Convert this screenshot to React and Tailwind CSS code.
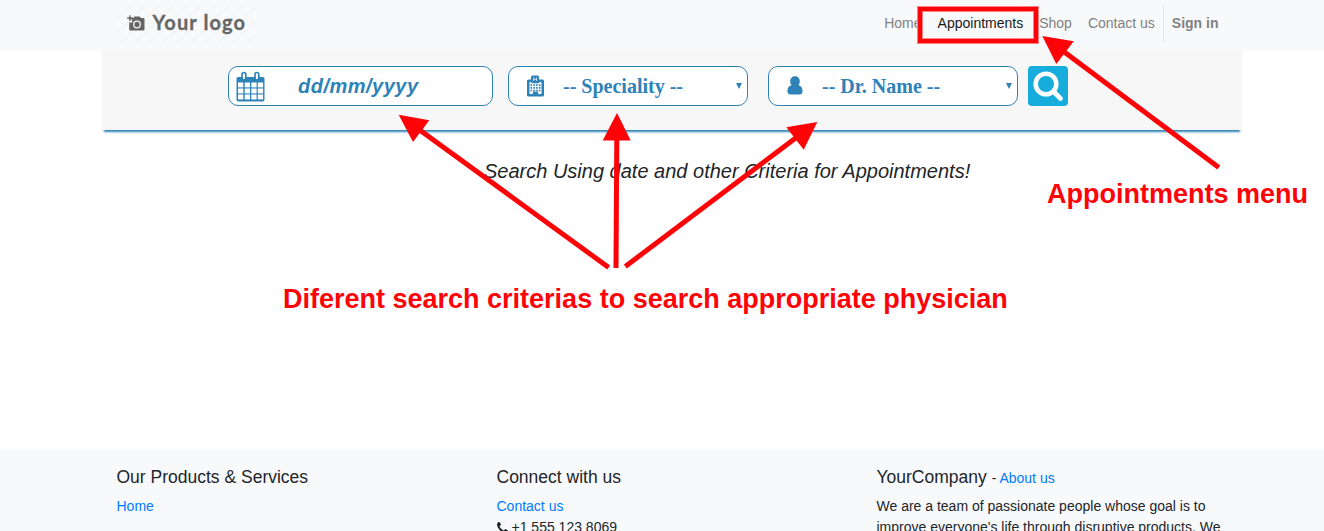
const arrows = [
  { head: '398.7,114.7 429.3,120.3 413,142', x1: 608.7, y1: 267.5, x2: 419, y2: 129.5 },
  { head: '617,113 602.7,140.5 630.7,140.5', x1: 616, y1: 268, x2: 616.8, y2: 138 },
  { head: '817.3,122 786.3,127.3 803.7,149.7', x1: 625.3, y1: 266.5, x2: 797, y2: 137 },
  { head: '1042.3,36 1073.7,41.3 1056.3,64', x1: 1218.8, y1: 167.5, x2: 1063, y2: 51 },
];

function LogoMark() {
  return (
    <svg viewBox="0 0 138 38" className="h-[38px] w-[138px]">
      <defs>
        <pattern id="stripes" width="14" height="14" patternUnits="userSpaceOnUse">
          <path d="M-3 17L17 -3M-3 3L3 -3M11 17L17 11" stroke="#f4f5f5" strokeWidth="2.2" />
        </pattern>
      </defs>
      <rect width="138" height="38" fill="url(#stripes)" />
      <path d="M12.5 13h3.8l1.2-1.5h5L24 13h2.2c.8 0 1.3.5 1.3 1.200v10c0 .8-.5 1.300-1.300 1.300H13.500c-.8 0-1.300-.5-1.300-1.300v-6.700h3v-3h-2.700z" fill="#666" />
      <circle cx="20" cy="19.500" r="3.300" fill="none" stroke="#f8f9fb" strokeWidth="1.300" />
      <path d="M12.900 10.300v5.600M10.200 13h5.400" stroke="#666" strokeWidth="1.300" />
      <text x="35.500" y="25" textLength="92.500" lengthAdjust="spacing" fill="#666" stroke="#666" strokeWidth=".3" className="font-['Lato',sans-serif] text-[20px] font-bold">Your logo</text>
    </svg>
  );
}

function CalendarIcon() {
  return (
    <svg viewBox="0 0 29 31" className="h-[31px] w-[29px] shrink-0">
      <rect x="0.500" y="6" width="28" height="24.500" rx="1.800" fill="#2e82b8" />
      {[2, 8.700, 15.300, 21.800].map((x) =>
        [11.500, 17.500, 23.500].map((y) => (
          <rect key={`${x}-${y}`} x={x} y={y} width="5.300" height="4.900" fill="#fff" />
        )),
      )}
      <rect x="6" y="1.500" width="3.800" height="7.500" rx="1.900" fill="#fff" stroke="#2e82b8" strokeWidth="1.700" />
      <rect x="19" y="1.500" width="3.800" height="7.500" rx="1.900" fill="#fff" stroke="#2e82b8" strokeWidth="1.700" />
    </svg>
  );
}

function HospitalIcon() {
  return (
    <svg viewBox="0 0 17 22" className="h-[22px] w-[17px] shrink-0">
      <path d="M0 6q0-1.500 1.500-1.500H4V2q0-1.500 1.500-1.500h5Q12 .5 12 2v2.500h3.500Q17 4.500 17 6v14q0 1.500-1.500 1.500h-14Q0 21.500 0 20z" fill="#2e82b8" />
      <path d="M6.700 2.500v3.500M9.500 2.500v3.500M6.700 4.300h2.800" stroke="#fff" strokeWidth=".7" />
      <path d="M2.500 7.200h2.200v1h7.300v-1h2.500v11.800h-3.300v-2.500H5.800v2.500H2.500z" fill="#fff" />
      <path d="M3.500 10.200h10M3.500 12.900h10M3.500 15.500h10" stroke="#2e82b8" strokeWidth="1.700" strokeDasharray="1.600 1.200" />
    </svg>
  );
}

function PersonIcon() {
  return (
    <svg viewBox="0 0 16 19" className="relative -top-px h-[19px] w-4 shrink-0">
      <path d="M8 .3c2.900 0 4.800 2.100 4.800 5 0 1.500-.5 2.900-1.300 3.900 2.600.4 4.100 2.700 4.100 6 0 2-1.300 3.300-3.200 3.300H3.600C1.700 18.500.4 17.200.4 15.200c0-3.300 1.500-5.600 4.100-6C3.700 8.200 3.200 6.800 3.200 5.300c0-2.900 1.900-5 4.800-5z" fill="#2e82b8" />
    </svg>
  );
}

function Caret() {
  return (
    <svg viewBox="0 0 6 6" className="ml-auto h-1.5 w-1.5 shrink-0">
      <path d="M0 0h6L3 6z" fill="#2e82b8" />
    </svg>
  );
}

function PhoneIcon() {
  return (
    <svg viewBox="0 128 1408 1408" className="mr-1 inline-block h-[11px] w-[11px] align-[-1px]">
      <path fill="currentColor" d="M1408 1240q0 27-10 70.5t-21 68.5q-21 50-122 106-94 51-186 51-27 0-53-3.5t-57.5-12.5-47-14.5-55.5-20.5-49-18q-98-35-175-83-127-79-264-216t-216-264q-48-77-83-175-3-9-18-49t-20.5-55.5-14.5-47-12.5-57.5-3.5-53q0-92 51-186 56-101 106-122 25-11 68.5-21t70.5-10q14 0 21 3 18 6 53 76 11 19 30 54t35 63.5 31 53.5q3 4 17.5 25t21.5 35.5 7 28.5q0 20-28.5 50t-62 55-62 53-28.5 46q0 9 5 22.5t8.5 20.5 14 24 11.5 19q76 137 174 235t235 174q2 1 19 11.5t24 14 20.5 8.5 22.5 5q18 0 46-28.5t53-62 55-62 50-28.5q14 0 28.5 7t35.5 21.5 25 17.5q25 15 53.5 31t63.500 35 54 30q70 35 76 53 3 7 3 21z" />
    </svg>
  );
}

function Header() {
  return (
    <header className="flex h-[50px] items-start justify-between bg-[#f8f9fb] pt-[5px] pr-[105.5px] pl-[116.5px]">
      <LogoMark />
      <nav className="flex h-[37px] items-center text-[#808182]">
        <a className="mr-4">Home</a>
        <a className="mr-4 text-[#1a1a1a]">Appointments</a>
        <a className="mr-4">Shop</a>
        <a className="mr-2">Contact us</a>
        <a className="flex h-[37px] items-center border-l border-[#e4e5e7] pl-2 font-bold">Sign in</a>
      </nav>
    </header>
  );
}

function SearchBar() {
  return (
    <section className="ml-[102px] flex h-20 w-[1140px] items-start bg-[#f7f7f7] pt-4 pl-[126px] shadow-[0_4px_2px_-2px_#2e82b8]">
      <div className="flex h-10 w-[265px] items-center rounded-[10px] border border-[#2e82b8] bg-white pl-[7px]">
        <CalendarIcon />
        <span className="ml-[33px] text-[20px] leading-none font-bold italic tracking-[0.5px] text-[#2e82b8]">dd/mm/yyyy</span>
      </div>
      <div className="ml-[15px] flex h-10 w-[240px] items-center rounded-[10px] border border-[#2e82b8] bg-white pr-[5px] pl-[18px]">
        <HospitalIcon />
        <span className="ml-[19px] font-['Liberation_Serif',serif] text-[20px] leading-none font-bold text-[#2e82b8]">-- Speciality --</span>
        <Caret />
      </div>
      <div className="ml-5 flex h-10 w-[250px] items-center rounded-[10px] border border-[#2e82b8] bg-white pr-[5px] pl-[18px]">
        <PersonIcon />
        <span className="ml-[19px] font-['Liberation_Serif',serif] text-[20px] leading-none font-bold text-[#2e82b8]">-- Dr. Name --</span>
        <Caret />
      </div>
      <button className="ml-2.5 h-10 w-10 rounded-[4px] bg-[#16addd]">
        <svg viewBox="0 0 40 40" className="h-10 w-10" fill="none" stroke="#fff">
          <circle cx="18" cy="18" r="10.300" strokeWidth="4.600" />
          <path d="M25.500 25.500l7 7" strokeWidth="4.600" strokeLinecap="round" />
        </svg>
      </button>
    </section>
  );
}

function Footer() {
  return (
    <footer className="grid h-[81px] grid-cols-[380px_380px_380px] overflow-hidden bg-[#f8f9fb] pt-[17px] pl-[116.5px]">
      <div>
        <h4 className="mb-2 text-[17.5px] leading-[21px]">Our Products &amp; Services</h4>
        <a className="text-[#007bff]">Home</a>
      </div>
      <div>
        <h4 className="mb-2 text-[17.5px] leading-[21px]">Connect with us</h4>
        <a className="block text-[#007bff]">Contact us</a>
        <p><PhoneIcon />+1 555 123 8069</p>
      </div>
      <div className="w-[350px]">
        <h4 className="mb-2 h-[21px] text-[17.5px] leading-[21px]">
          YourCompany <small className="text-[14px] leading-none">- <a className="text-[#007bff]">About us</a></small>
        </h4>
        <p>We are a team of passionate people whose goal is to improve everyone's life through disruptive products. We</p>
      </div>
    </footer>
  );
}

function Annotations() {
  return (
    <div className="pointer-events-none absolute inset-0 text-[27px] leading-[31px] font-bold whitespace-nowrap text-[#fe0207]">
      <svg viewBox="0 0 1324 531" className="absolute inset-0 h-[531px] w-[1324px]">
        <rect x="920" y="9" width="116" height="32" fill="none" stroke="#ff8085" strokeWidth="6" />
        <rect x="920" y="9" width="116" height="32" fill="none" stroke="#fe0207" strokeWidth="4" />
        {arrows.map((a) => (
          <g key={a.head} fill="#fe0207" stroke="#fe0207">
            <line x1={a.x1} y1={a.y1} x2={a.x2} y2={a.y2} strokeWidth="5" />
            <polygon points={a.head} stroke="none" />
          </g>
        ))}
      </svg>
      <span className="absolute top-[179px] left-[1047px]">Appointments menu</span>
      <span className="absolute top-[284px] left-[283px]">Diferent search criterias to search appropriate physician</span>
    </div>
  );
}

export default function App() {
  return (
    <div className="relative flex h-[531px] w-[1324px] flex-col overflow-hidden bg-white font-['Liberation_Sans',Arial,sans-serif] text-[14px] leading-[21px] text-[#212529]">
      <Header />
      <SearchBar />
      <main className="h-[320px] pt-[29px] pl-[484px]">
        <h2 className="text-[20px] leading-6 italic">Search Using date and other Criteria for Appointments!</h2>
      </main>
      <Footer />
      <Annotations />
    </div>
  );
}
